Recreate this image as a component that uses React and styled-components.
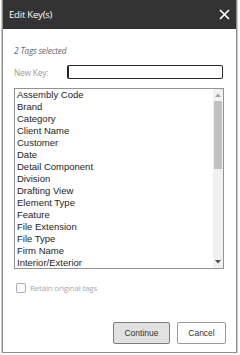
import React from "react"
import styled, { createGlobalStyle } from "styled-components"

const GlobalStyle = createGlobalStyle`
  html, body {
    margin: 0;
    padding: 0;
    background: #ffffff;
  }
`

const tags = [
  "Assembly Code",
  "Brand",
  "Category",
  "Client Name",
  "Customer",
  "Date",
  "Detail Component",
  "Division",
  "Drafting View",
  "Element Type",
  "Feature",
  "File Extension",
  "File Type",
  "Firm Name",
  "Interior/Exterior"
]

//dialog frame
const Dialog = styled.div`
  box-sizing: border-box;
  margin-left: 2px;
  width: 235px;
  height: 353px;
  border: 1px solid #8e8e8e;
  border-top: none;
  box-shadow: 0 0 0 1px #c8c8c8;
  background: #ffffff;
  display: flex;
  flex-direction: column;
`

const Header = styled.div`
  height: 29px;
  flex-shrink: 0;
  background: #333333;
  display: flex;
  align-items: center;
  justify-content: space-between;
  padding: 0 6px 0 6px;
  color: #ffffff;
  font-family: "Open Sans", "Noto Sans", sans-serif;
  font-size: 9.5px;
  letter-spacing: -0.2px;
`

const CloseButton = styled.button`
  border: none;
  background: none;
  padding: 0;
  width: 11px;
  height: 11px;
  display: flex;
  cursor: pointer;
`

const Body = styled.div`
  flex: 1;
  display: flex;
  flex-direction: column;
  padding: 0 10px 8px 11px;
`

const Selected = styled.div`
  margin-top: 16px;
  height: 12px;
  line-height: 12px;
  font-family: "Open Sans", "Noto Sans", sans-serif;
  font-style: italic;
  font-size: 8.4px;
  letter-spacing: -0.2px;
  color: #5c6b7b;
`

const KeyRow = styled.div`
  margin-top: 8px;
  height: 14px;
  display: flex;
  align-items: center;
`

const KeyLabel = styled.label`
  width: 53px;
  font-family: "Open Sans", "Noto Sans", sans-serif;
  font-size: 8.4px;
  letter-spacing: -0.2px;
  color: #9a9a9a;
`

const KeyInput = styled.input`
  box-sizing: border-box;
  width: 156px;
  height: 14px;
  border: 1.5px solid #262626;
  border-left-width: 2.5px;
  border-radius: 2px;
  padding: 0;
  outline: none;
  background: #ffffff;
`

const ListBox = styled.div`
  margin-top: 9px;
  box-sizing: border-box;
  width: 210px;
  height: 181px;
  flex-shrink: 0;
  border: 1px solid #939393;
  display: flex;
  overflow: hidden;
`

const Items = styled.ul`
  flex: 1;
  margin: 0;
  padding: 0;
  list-style: none;
  overflow: hidden;
`

const Item = styled.li`
  height: 12px;
  line-height: 12px;
  padding-left: 2px;
  font-family: "Liberation Sans", Arial, sans-serif;
  font-size: 9.5px;
  color: #1e1e1e;
  white-space: nowrap;
`

const ScrollTrack = styled.div`
  width: 10px;
  background: #f1f1f1;
  display: flex;
  flex-direction: column;
  align-items: center;
`

const Arrow = styled.div`
  height: 12px;
  display: flex;
  align-items: center;
  justify-content: center;
`

const Thumb = styled.div`
  width: 8px;
  height: 68px;
  background: #c1c1c1;
`

const Spacer = styled.div`
  flex: 1;
`

const CheckRow = styled.div`
  margin-top: 14px;
  height: 10px;
  display: flex;
  align-items: center;
  gap: 4px;
  padding-left: 2px;
`

const CheckText = styled.span`
  font-family: "Open Sans", "Noto Sans", sans-serif;
  font-size: 8px;
  letter-spacing: -0.2px;
  line-height: 10px;
  color: #a9a9a9;
`

const CheckBox = styled.span`
  box-sizing: border-box;
  flex-shrink: 0;
  width: 10px;
  height: 10px;
  border: 1px solid #a9a9a9;
  border-radius: 2px;
  background: #ffffff;
`

const Footer = styled.div`
  margin-top: auto;
  display: flex;
  justify-content: flex-end;
  gap: 7px;
`

const Button = styled.button`
  box-sizing: border-box;
  width: ${props => props.w}px;
  height: 22px;
  border: 1px solid ${props => (props.primary ? "#7d7d7d" : "#9a9a9a")};
  border-radius: 2px;
  background: ${props => (props.primary ? "#e1e1e1" : "#ffffff")};
  font-family: "Liberation Sans", Arial, sans-serif;
  font-size: 8.5px;
  color: #333333;
  padding: 0;
`

const TriangleUp = () => (
  <svg width="6" height="4" viewBox="0 0 6 4">
    <path d="M0 4 L3 0.5 L6 4 Z" fill="#a3a3a3" />
  </svg>
)

const TriangleDown = () => (
  <svg width="6" height="4" viewBox="0 0 6 4">
    <path d="M0 0 L6 0 L3 3.5 Z" fill="#505050" />
  </svg>
)

export default function App() {
  return (
    <>
      <GlobalStyle />
      <Dialog>
        <Header>
          <span>Edit Key(s)</span>
          <CloseButton aria-label="close">
            <svg width="11" height="11" viewBox="0 0 11 11">
              <path
                d="M1 1 L10 10 M10 1 L1 10"
                stroke="#ffffff"
                strokeWidth="1.7"
              />
            </svg>
          </CloseButton>
        </Header>
        <Body>
          <Selected>2 Tags selected</Selected>
          <KeyRow>
            <KeyLabel>New Key:</KeyLabel>
            <KeyInput />
          </KeyRow>
          <ListBox>
            <Items>
              {tags.map((tag, i) => (
                <Item key={i}>{tag}</Item>
              ))}
            </Items>
            <ScrollTrack>
              <Arrow>
                <TriangleUp />
              </Arrow>
              <Thumb />
              <Spacer />
              <Arrow>
                <TriangleDown />
              </Arrow>
            </ScrollTrack>
          </ListBox>
          <CheckRow>
            <CheckBox />
            <CheckText>Retain original tags</CheckText>
          </CheckRow>
          <Footer>
            <Button primary w={57}>
              Continue
            </Button>
            <Button w={49}>Cancel</Button>
          </Footer>
        </Body>
      </Dialog>
    </>
  )
}
